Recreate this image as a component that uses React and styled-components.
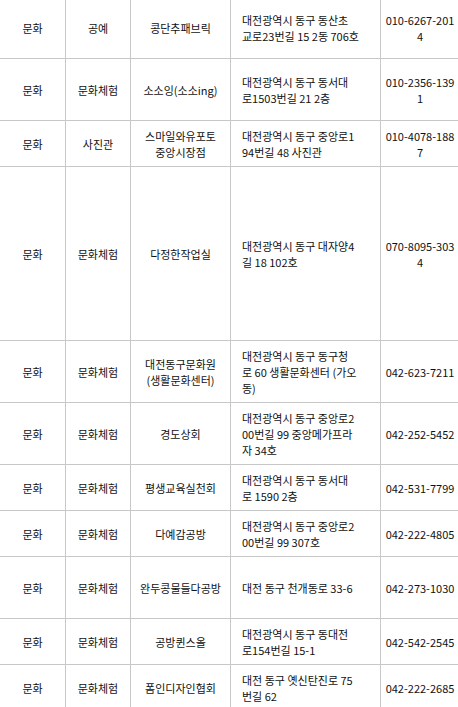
import React from "react";
import styled, { createGlobalStyle } from "styled-components";

const GlobalStyle = createGlobalStyle`
  html, body {
    margin: 0;
    padding: 0;
    background: #fff;
    overflow: hidden;
  }
  * {
    box-sizing: border-box;
  }
`;

const Table = styled.div`
  width: 460px;
  margin-top: -3px;
  font-family: "Noto Sans CJK KR", "Noto Sans", sans-serif;
  font-size: 11px;
  line-height: 16px;
  color: #111;
`;

const Row = styled.div`
  display: grid;
  grid-template-columns: 66px 65px 100px 150px 79px;
  height: ${(p) => p.$h}px;
  border-bottom: 1px solid #c8c8c8;
`;

const Cell = styled.div`
  display: flex;
  flex-direction: column;
  justify-content: center;
  align-items: ${(p) => (p.$left ? "flex-start" : "center")};
  padding: 0 ${(p) => (p.$left ? "11px" : "4px")};
  border-right: 1px solid #c8c8c8;
`;

const Line = styled.span`
  display: block;
  white-space: nowrap;
`;

const rows = [
  { h: 62, type: "공예", name: ["콩단추패브릭"], addr: ["대전광역시 동구 동산초", "교로23번길 15 2동 706호"], tel: ["010-6267-201", "4"] },
  { h: 62, type: "문화체험", name: ["소소잉(소소ing)"], addr: ["대전광역시 동구 동서대", "로1503번길 21 2층"], tel: ["010-2356-139", "1"] },
  { h: 46, type: "사진관", name: ["스마일와유포토", "중앙시장점"], addr: ["대전광역시 동구 중앙로1", "94번길 48 사진관"], tel: ["010-4078-188", "7"] },
  { h: 174, type: "문화체험", name: ["다정한작업실"], addr: ["대전광역시 동구 대자양4", "길 18 102호"], tel: ["070-8095-303", "4"] },
  { h: 62, type: "문화체험", name: ["대전동구문화원", "(생활문화센터)"], addr: ["대전광역시 동구 동구청", "로 60 생활문화센터 (가오", "동)"], tel: ["042-623-7211"] },
  { h: 62, type: "문화체험", name: ["경도상회"], addr: ["대전광역시 동구 중앙로2", "00번길 99 중앙메가프라", "자 34호"], tel: ["042-252-5452"] },
  { h: 46, type: "문화체험", name: ["평생교육실천회"], addr: ["대전광역시 동구 동서대", "로 1590 2층"], tel: ["042-531-7799"] },
  { h: 46, type: "문화체험", name: ["다예감공방"], addr: ["대전광역시 동구 중앙로2", "00번길 99 307호"], tel: ["042-222-4805"] },
  { h: 62, type: "문화체험", name: ["완두콩물들다공방"], addr: ["대전 동구 천개동로 33-6"], tel: ["042-273-1030"] },
  { h: 46, type: "문화체험", name: ["공방퀸스올"], addr: ["대전광역시 동구 동대전", "로154번길 15-1"], tel: ["042-542-2545"] },
  { h: 46, type: "문화체험", name: ["폼인디자인협회"], addr: ["대전 동구 옛신탄진로 75", "번길 62"], tel: ["042-222-2685"] },
];

function Lines({ items }) {
  return items.map((t, i) => <Line key={i}>{t}</Line>);
}

export default function App() {
  return (
    <>
      <GlobalStyle />
      <Table>
        {rows.map((r, i) => (
          <Row key={i} $h={r.h}>
            <Cell>문화</Cell>
            <Cell>{r.type}</Cell>
            <Cell>
              <Lines items={r.name} />
            </Cell>
            <Cell $left>
              <Lines items={r.addr} />
            </Cell>
            <Cell>
              <Lines items={r.tel} />
            </Cell>
          </Row>
        ))}
      </Table>
    </>
  );
}
